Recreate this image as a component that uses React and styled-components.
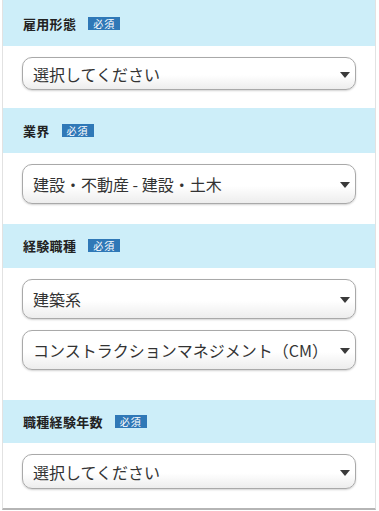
import React from 'react';
import styled, { createGlobalStyle } from 'styled-components';

const GlobalStyle = createGlobalStyle`
  html, body {
    margin: 0;
    padding: 0;
    background: #fff;
  }
  body {
    font-family: "Noto Sans CJK JP", "Noto Sans", sans-serif;
    color: #333;
  }
`;

const Panel = styled.div`
  margin-left: 2px;
  width: 374px;
  height: 510px;
  box-sizing: border-box;
  border-left: 1px solid #e2e2e2;
  border-right: 1px solid #e2e2e2;
  border-bottom: 2px solid #b5b5b5;
  display: flex;
  flex-direction: column;
`;

const Header = styled.div`
  height: ${(p) => p.$h || 45}px;
  background: #cdeef9;
  display: flex;
  align-items: center;
  padding: 0 20px;
  gap: 12px;
`;

const Label = styled.span`
  font-size: 13px;
  font-weight: 700;
  color: #222;
  letter-spacing: 0.3px;
`;

const Badge = styled.span`
  background: #2f78b7;
  color: #fff;
  font-size: 10px;
  line-height: 13px;
  padding: 0 5px;
  letter-spacing: 1px;
`;

const Body = styled.div`
  display: flex;
  flex-direction: column;
  gap: 11px;
  padding: 11px 19px ${(p) => p.$bottom || 19}px 19px;
`;

const SelectBox = styled.div`
  height: ${(p) => p.$h || 40}px;
  box-sizing: border-box;
  border: 1px solid #a9a9a9;
  border-radius: 10px;
  background: linear-gradient(#ffffff 55%, #ededed);
  box-shadow: 0 1px 2px rgba(0, 0, 0, 0.18);
  display: flex;
  align-items: center;
  justify-content: space-between;
  padding: 0 5px 0 10px;
  font-size: 16px;
  color: #333;
`;

const Arrow = styled.span`
  width: 0;
  height: 0;
  border-left: 5px solid transparent;
  border-right: 5px solid transparent;
  border-top: 6px solid #3a3a3a;
  margin-top: 2px;
`;

const Select = ({ value, h }) => (
  <SelectBox $h={h}>
    <span>{value}</span>
    <Arrow />
  </SelectBox>
);

const Section = ({ label, headerH, bottom, children }) => (
  <>
    <Header $h={headerH}>
      <Label>{label}</Label>
      <Badge>必須</Badge>
    </Header>
    <Body $bottom={bottom}>{children}</Body>
  </>
);

const App = () => (
  <>
    <GlobalStyle />
    <Panel>
      <Section label="雇用形態" headerH={47} bottom={18}>
        <Select value="選択してください" h={33} />
      </Section>
      <Section label="業界" bottom={20}>
        <Select value="建設・不動産 - 建設・土木" />
      </Section>
      <Section label="経験職種" headerH={44} bottom={30}>
        <Select value="建築系" />
        <Select value="コンストラクションマネジメント（CM）" />
      </Section>
      <Section label="職種経験年数" headerH={44}>
        <Select value="選択してください" h={35} />
      </Section>
    </Panel>
  </>
);

export default App;
